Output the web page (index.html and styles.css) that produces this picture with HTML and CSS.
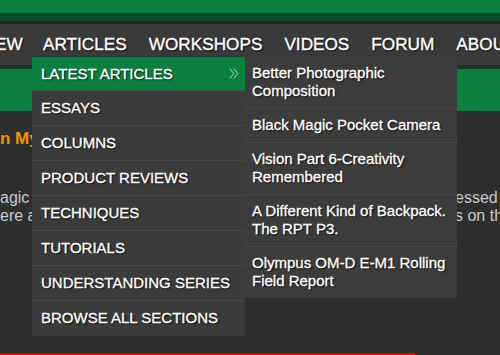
FILE: index.html
```html
<!DOCTYPE html>
<html>
<head>
<meta charset="utf-8">
<link rel="stylesheet" href="styles.css">
</head>
<body>
<div class="page">
  <div class="topbar"></div>
  <nav class="nav">
    <ul class="nav-list">
      <li class="nav-item nav-first">EW</li>
      <li class="nav-item nav-open">ARTICLES
        <div class="dropdown">
          <ul class="menu">
            <li class="menu-item active"><span>LATEST ARTICLES</span>
              <svg class="chev" width="10" height="11" viewBox="0 0 10 11"><polyline points="0.8,0.5 4.8,5.5 0.8,10.5" /><polyline points="4.8,0.5 8.8,5.5 4.8,10.5" /></svg>
            </li>
            <li class="menu-item">ESSAYS</li>
            <li class="menu-item">COLUMNS</li>
            <li class="menu-item">PRODUCT REVIEWS</li>
            <li class="menu-item">TECHNIQUES</li>
            <li class="menu-item">TUTORIALS</li>
            <li class="menu-item">UNDERSTANDING SERIES</li>
            <li class="menu-item">BROWSE ALL SECTIONS</li>
          </ul>
          <ul class="submenu">
            <li class="sub-item">Better Photographic Composition</li>
            <li class="sub-item">Black Magic Pocket Camera</li>
            <li class="sub-item">Vision Part 6-Creativity Remembered</li>
            <li class="sub-item">A Different Kind of Backpack. The RPT P3.</li>
            <li class="sub-item">Olympus OM-D E-M1 Rolling Field Report</li>
          </ul>
        </div>
      </li>
      <li class="nav-item">WORKSHOPS</li>
      <li class="nav-item">VIDEOS</li>
      <li class="nav-item">FORUM</li>
      <li class="nav-item">ABOUT</li>
    </ul>
  </nav>
  <div class="crumb"></div>
  <main class="content">
    <h2 class="title">n My</h2>
    <div class="para">
      <p class="para-left">agic<br>ere a</p>
      <p class="para-right">essed<br>s on the</p>
    </div>
  </main>
  <div class="redline"></div>
</div>
</body>
</html>
```
FILE: styles.css
```css
* { box-sizing: border-box; }
html, body { margin: 0; padding: 0; }
body {
  background: #2e2e2e;
  font-family: "Liberation Sans", Arial, Helvetica, sans-serif;
  overflow: hidden;
  width: 500px;
  height: 355px;
}
ul { list-style: none; margin: 0; padding: 0; }
p, h2 { margin: 0; }

.page {
  display: flex;
  flex-direction: column;
  height: 355px;
  overflow: hidden;
}

.topbar {
  height: 24px;
  background: #0a7f40;
  border-bottom: 4px solid #0b4a27;
  box-shadow: inset 0 -7px 0 #0b4a27;
  flex-shrink: 0;
  position: relative;
}
.topbar::after {
  content: "";
  position: absolute;
  left: 0; right: 0; bottom: -4px;
  height: 3px;
  background: #232323;
}

.nav {
  height: 41px;
  background: #3a3a3a;
  flex-shrink: 0;
  position: relative;
  z-index: 5;
}
.nav-list {
  display: flex;
  white-space: nowrap;
}
.nav-item {
  font-size: 17.2px;
  line-height: 41px;
  color: #fff;
  padding: 0 11px;
  -webkit-text-stroke: 0.35px #fff;
  text-shadow: 1px 1px 1.5px rgba(0,0,0,0.9);
  flex-shrink: 0;
}
.nav-first {
  margin-left: -5px;
  width: 37px;
  padding: 0;
}
.nav-open { position: relative; }

.dropdown {
  position: absolute;
  top: 33px;
  left: 0;
  display: flex;
  align-items: flex-start;
  z-index: 10;
}
.menu {
  width: 213px;
  background: #3b3b3b;
  padding-bottom: 1px;
}
.menu-item {
  height: 35px;
  border-top: 1px solid #474747;
  padding: 0 6px 0 9px;
  display: flex;
  align-items: center;
  justify-content: space-between;
  font-size: 15px;
  line-height: 18px;
  color: #fff;
  -webkit-text-stroke: 0.3px #fff;
  text-shadow: 1px 1px 1.5px rgba(0,0,0,0.9);
}
.menu-item:first-child {
  border-top: none;
  height: 33px;
}
.menu-item.active {
  background: #0a7f40;
}
.chev {
  display: block;
  fill: none;
  stroke: #a8d6b8;
  stroke-width: 1;
}

.submenu {
  width: 212px;
  background: #3c3c3c;
}
.sub-item {
  font-size: 15px;
  line-height: 18px;
  color: #fff;
  white-space: normal;
  padding: 7px 4px 8px 7px;
  border-top: 1px solid #474747;
  -webkit-text-stroke: 0.3px #fff;
  text-shadow: 1px 1px 1.5px rgba(0,0,0,0.9);
}
.sub-item:first-child { border-top: none; }

.crumb {
  height: 49px;
  background: #0a7f40;
  border-top: 4px solid #1b3125;
  border-bottom: 3px solid #1d3a28;
  flex-shrink: 0;
}

.content {
  flex: 1;
}
.title {
  margin-top: 15px;
  font-size: 17px;
  line-height: 20px;
  font-weight: bold;
  color: #f39200;
  white-space: nowrap;
}
.para {
  margin-top: 40px;
  display: grid;
  grid-template-columns: 455px 1fr;
  font-size: 16px;
  line-height: 18px;
  color: #cacaca;
  white-space: nowrap;
}
.para-right { overflow: hidden; }

.redline {
  width: 415px;
  height: 2px;
  background: #e30000;
  flex-shrink: 0;
}
```
